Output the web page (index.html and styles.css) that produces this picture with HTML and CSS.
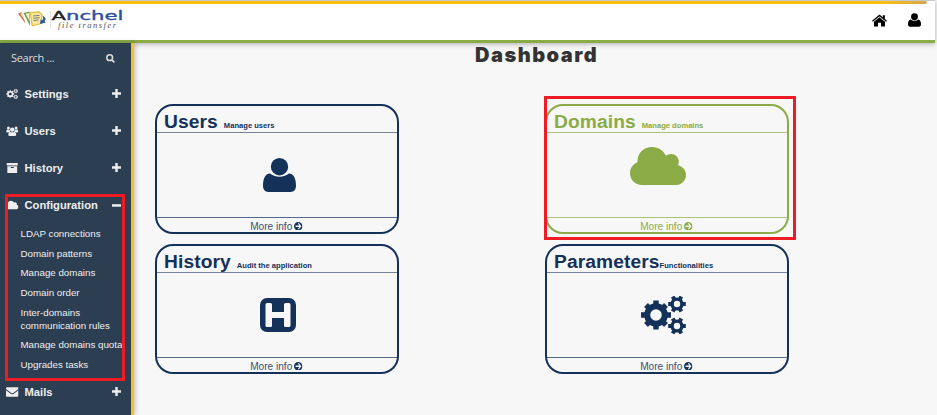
FILE: index.html
```html
<!DOCTYPE html>
<html lang="en">
<head>
<meta charset="utf-8">
<title>Anchel file transfer</title>
<link rel="stylesheet" href="styles.css">
</head>
<body>
<svg class="defs" aria-hidden="true">
  <symbol id="user" viewBox="0 0 33 34"><circle cx="16.5" cy="8.7" r="8.7"/><path d="M7 15.6C2 16 0 21 0 27.8 0 31.500 2 34 5.500 34h22c3.500 0 5.500-2.500 5.500-6.200C33 21 31 16 26 15.600c-2.500 2-5.500 3.200-9.500 3.200S9.500 17.600 7 15.600z"/></symbol>
  <symbol id="cloud" viewBox="0 0 56 38"><path d="M12 38C5 38 0 32.500 0 26.200 0 21 3 17 7.500 15.200V14C7.500 6 14 0 22 0c6.500 0 11.500 3.500 14 8.800C37.500 7.700 39 7 41 7c4.500 0 7.800 3.500 7.800 7.800 0 1.200-.3 2.400-1 3.500C52.500 19.500 56 23 56 28c0 5.500-4.500 10-10 10z"/></symbol>
  <symbol id="hsq" viewBox="0 0 36 34"><path fill-rule="evenodd" d="M7 0h22a7 7 0 0 1 7 7v20a7 7 0 0 1-7 7H7a7 7 0 0 1-7-7V7a7 7 0 0 1 7-7zM7 5q-1.500 0-1.500 1.500v21Q5.500 29 7 29h3.500q1.500 0 1.500-1.500V20h12v7.500q0 1.500 1.500 1.500H29q1.500 0 1.500-1.500v-21Q30.500 5 29 5h-3.500Q24 5 24 6.500V14H12V6.500Q12 5 10.500 5z"/></symbol>
  <symbol id="small-gear" viewBox="-9 -9 18 18" overflow="visible"><g fill="none" stroke="currentColor"><circle r="4.900" stroke-width="3.400"/><path stroke-width="4" d="M5.500 0H8.800M-5.500 0H-8.800M2.750 4.760L4.300 7.450M-2.750 4.760L-4.300 7.450M2.750-4.760L4.300-7.450M-2.750-4.760L-4.300-7.450"/></g></symbol>
  <symbol id="gears" viewBox="0 0 45 38"><g fill="none" stroke="currentColor"><g transform="translate(15 19)"><circle r="8.800" stroke-width="6"/><path stroke-width="5.400" d="M10 0H15M-10 0H-15M0 10V14.500M0-10V-14.500M7 7L10 10M-7 7L-10 10M7-7L10-10M-7-7L-10-10"/></g></g><use href="#small-gear" x="27" y="-1" width="18" height="18"/><use href="#small-gear" x="27" y="21" width="18" height="18"/></symbol>
  <symbol id="arrow" viewBox="0 0 8 8"><path fill-rule="evenodd" d="M4 0a4 4 0 1 1 0 8 4 4 0 0 1 0-8zM3.600 1.500l1.400 1.800H1.500v1.400H5L3.600 6.500l.9.600L7 4 4.500.9z"/></symbol>
  <symbol id="plus" viewBox="0 0 9 9"><path d="M3.300 0h2.400v3.300H9v2.400H5.700V9H3.300V5.700H0V3.300h3.300z"/></symbol>
  <symbol id="minus" viewBox="0 0 9 9"><path d="M0 3.200h9v2.500H0z"/></symbol>
  <symbol id="search" viewBox="0 0 9 9"><circle cx="3.700" cy="3.700" r="2.900" fill="none" stroke="currentColor" stroke-width="1.500"/><path d="M5.900 5.900L8.400 8.400" stroke="currentColor" stroke-width="1.700"/></symbol>
  <symbol id="users" viewBox="0 0 12 10"><circle cx="2.200" cy="2" r="1.500"/><circle cx="9.800" cy="2" r="1.500"/><circle cx="6" cy="3.600" r="2.200"/><path d="M0 6.200Q0 3.500 1 3.500l2.500.6Q3.600 5 4 5.600L2 6.500zM12 6.200q0-2.700-1-2.700l-2.500.6Q8.400 5 8 5.600l2 .9zM3.800 5.700Q2 6.200 2 8.500 2 10 3.500 10h5Q10 10 10 8.500q0-2.300-1.800-2.800Q6 7 3.800 5.700z"/></symbol>
  <symbol id="archive" viewBox="0 0 11 10"><path fill-rule="evenodd" d="M0 0h11v2.600H0zM.6 3.200h9.800V10H.6zM4 4v.9h3V4z"/></symbol>
  <symbol id="mail" viewBox="0 0 12 9"><path d="M0 1Q0 0 1 0h10q1 0 1 1v.7L7 5.400Q6 6 5 5.400L0 1.700zM0 2.900l4.500 3.300q1.500 1 3 0L12 2.900V8q0 1-1 1H1Q0 9 0 8z"/></symbol>
  <symbol id="home" viewBox="0 0 15 12"><path d="M7.500 2.700L13 7.300V12H9V8.300H6V12H2V7.300z"/><path fill="none" stroke="currentColor" stroke-width="1.300" d="M.4 6.700L7.500.9l7.100 5.800"/><path d="M10.800.8h2.100v4l-2.100-1.800z"/></symbol>
</svg>

<header class="topbar">
  <svg class="logo" viewBox="0 0 110 30" width="110" height="30">
    <path d="M0 7.500l3.500-1.200 4.300 11.500z" fill="#c96d45"/>
    <path d="M2.200 7.800l2-.7 3 7.800z" fill="#f4d8c7"/>
    <path d="M5.500 7l6-1.500L12 20z" fill="#759d45"/>
    <path d="M7.500 7.800l3.500-.9.500 8z" fill="#eef4dc"/>
    <path d="M12.300 6.700l8.500-.9 3.200 2.700-.8 9-9 2.300z" fill="#fae8a0" stroke="#e6bd3b" stroke-width="1.200"/>
    <path d="M15 10l6.500-.6M15.200 12.300l6.500-.6M15.500 14.600l5-.6" stroke="#64717a" stroke-width=".9"/>
    <path d="M24 9.500q5.500 2 2.500 6l1.500 1-6 1.500.7-4.500 1.300 1Q26.500 12 24 9.500z" fill="#29569d"/>
    <path d="M32.500 5v17" stroke="#dedede" stroke-width=".7"/>
    <text class="brand" x="33.500" y="14" textLength="72" lengthAdjust="spacingAndGlyphs"><tspan fill="#232323" stroke="#232323">A</tspan><tspan fill="#2e4f9d" stroke="#2e4f9d">nchel</tspan></text>
    <text class="tagline" x="40" y="22" textLength="58" lengthAdjust="spacing">file transfer</text>
  </svg>
  <nav class="actions"><svg class="home"><use href="#home"/></svg><svg class="profile"><use href="#user"/></svg></nav>
</header>

<div class="shell">
  <aside class="sidebar">
    <div class="search"><span>Search ...</span><svg><use href="#search"/></svg></div>
    <div class="item"><svg class="ico"><use href="#gears"/></svg><span>Settings</span><svg class="toggle"><use href="#plus"/></svg></div>
    <div class="item"><svg class="ico"><use href="#users"/></svg><span>Users</span><svg class="toggle"><use href="#plus"/></svg></div>
    <div class="item"><svg class="ico"><use href="#archive"/></svg><span>History</span><svg class="toggle"><use href="#plus"/></svg></div>
    <div class="item"><svg class="ico"><use href="#cloud"/></svg><span>Configuration</span><svg class="toggle"><use href="#minus"/></svg></div>
    <ul class="submenu">
      <li>LDAP connections</li>
      <li>Domain patterns</li>
      <li>Manage domains</li>
      <li>Domain order</li>
      <li>Inter-domains<br>communication rules</li>
      <li>Manage domains quota</li>
      <li>Upgrades tasks</li>
    </ul>
    <div class="item"><svg class="ico"><use href="#mail"/></svg><span>Mails</span><svg class="toggle"><use href="#plus"/></svg></div>
    <div class="highlight menu-highlight"></div>
  </aside>

  <main class="content">
    <h1>Dashboard</h1>
    <div class="cards">
      <section class="card">
        <div class="head"><h2>Users</h2><small>Manage users</small></div>
        <div class="body"><svg class="i-user"><use href="#user"/></svg></div>
        <div class="foot"><span>More info</span><svg><use href="#arrow"/></svg></div>
      </section>
      <section class="card green">
        <div class="head"><h2>Domains</h2><small>Manage domains</small></div>
        <div class="body"><svg class="i-cloud"><use href="#cloud"/></svg></div>
        <div class="foot"><span>More info</span><svg><use href="#arrow"/></svg></div>
        <div class="highlight card-highlight"></div>
      </section>
      <section class="card">
        <div class="head"><h2>History</h2><small>Audit the application</small></div>
        <div class="body"><svg class="i-h"><use href="#hsq"/></svg></div>
        <div class="foot"><span>More info</span><svg><use href="#arrow"/></svg></div>
      </section>
      <section class="card tight">
        <div class="head"><h2>Parameters</h2><small>Functionalities</small></div>
        <div class="body"><svg class="i-gears"><use href="#gears"/></svg></div>
        <div class="foot"><span>More info</span><svg><use href="#arrow"/></svg></div>
      </section>
    </div>
  </main>
</div>
</body>
</html>
```
FILE: styles.css
```css
* { box-sizing: border-box; }
body {
  margin: 0;
  width: 937px;
  height: 415px;
  overflow: hidden;
  background: #f7f7f7;
  font-family: "Liberation Sans", Arial, sans-serif;
}
svg { display: block; fill: currentColor; flex: none; }
.defs { position: absolute; width: 0; height: 0; }

.topbar {
  width: 935px;
  height: 43px;
  border-top: 1px solid #c9c9c9;
  border-bottom: 3px solid #8aab45;
  background: linear-gradient(90deg, #fdc010 880px, #d3a84c 926px, #fff 927px) top / 100% 3px no-repeat #fff;
  display: flex;
  justify-content: space-between;
  padding: 5px 14px 0 18px;
  box-shadow: 0 1px 5px rgba(0, 0, 0, .3);
}
.brand { font: 12.500px "DejaVu Sans", sans-serif; stroke-width: .35px; }
.tagline { font: italic 8.500px "Liberation Serif", serif; fill: #555; }
.actions { display: flex; gap: 21px; padding-top: 7px; color: #000; }
.home { width: 15px; height: 13px; margin-top: 1px; }
.profile { width: 13px; height: 14px; }

.shell { display: flex; height: 372px; }
.sidebar {
  position: relative;
  width: 134px;
  border-right: 3px solid #fdc010;
  background: #2c3e52;
  color: #eee;
  box-shadow: 1px 0 5px rgba(0, 0, 0, .25);
}
.search {
  height: 32px;
  padding: 0 16px 3px 11px;
  display: flex;
  align-items: center;
  justify-content: space-between;
  font: 11px "Open Sans", "Noto Sans", sans-serif;
  letter-spacing: -.3px;
  color: #ddd;
}
.search svg { width: 9px; height: 9px; margin-top: 2px; }
.item {
  height: 37.200px;
  padding: 0 10px 0 6px;
  display: flex;
  align-items: center;
  font-size: 11.200px;
  font-weight: bold;
}
.item span { flex: 1; margin-left: 6px; white-space: nowrap; }
.ico { width: 12.500px; height: 10px; }
.toggle { width: 9px; height: 9px; }
.submenu {
  list-style: none;
  margin: 0;
  padding: 3.500px 0 0 20.500px;
  height: 149.500px;
  font-size: 9.750px;
  line-height: 13px;
  white-space: nowrap;
}
.submenu li { margin-bottom: 6.600px; }
.highlight { position: absolute; border: 3px solid #ee1c25; }
.menu-highlight { left: 5px; top: 151px; width: 120px; height: 187px; }

.content { flex: 1; }
h1 {
  margin: 0;
  padding-left: 341px;
  height: 61px;
  font: 900 20px/24px Inter, sans-serif;
  letter-spacing: 1.500px;
  color: #333;
}
.cards {
  display: grid;
  grid-template-columns: 244px 244px;
  grid-template-rows: 130px 130px;
  column-gap: 146px;
  row-gap: 10px;
  padding-left: 21px;
}
.card {
  position: relative;
  border: 2px solid #14315a;
  border-radius: 18px;
  color: #14315a;
  display: flex;
  flex-direction: column;
}
.head {
  height: 27px;
  padding: 0 0 2px 7px;
  border-bottom: 1px solid #74849b;
  display: flex;
  align-items: baseline;
  gap: 6px;
}
h2 { margin: 0; font-size: 19.200px; line-height: 31px; letter-spacing: .1px; }
small { font-size: 7.600px; font-weight: bold; }
.tight .head { gap: 0; }
.body { flex: 1; display: flex; justify-content: center; padding-top: 15px; }
.foot {
  height: 15px;
  border-top: 1px solid #52698a;
  display: flex;
  justify-content: center;
  align-items: center;
  gap: 2px;
  padding: 2px 1px 0 0;
  font-size: 10.100px;
}
.foot span { opacity: .85; }
.foot svg { width: 8.500px; height: 8.500px; }
.i-user { width: 33px; height: 34px; margin: 10px 0 0 4px; }
.i-cloud { width: 56px; height: 38px; margin-right: 19px; margin-top: -1px; }
.i-h { width: 36px; height: 34px; margin: 10px 0 0 1px; }
.i-gears { width: 45px; height: 38px; margin: 8px 8px 0 0; }
.green { color: #8aab45; border-color: #8aab45; }
.green .head, .green .foot { border-color: #abc47a; }
.green .foot span { opacity: 1; }
.card-highlight { left: -3px; top: -10px; width: 252px; height: 144px; border-width: 3.500px; }
```
